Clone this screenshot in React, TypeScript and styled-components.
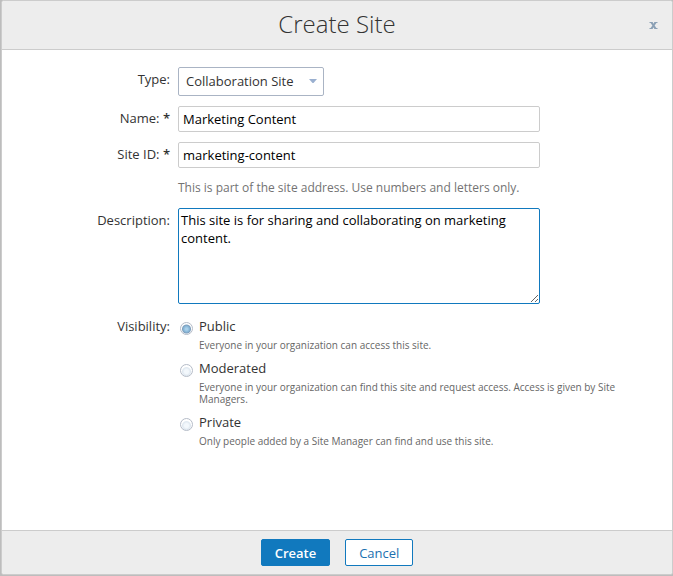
import React from "react";
import styled, { createGlobalStyle } from "styled-components";

const GlobalStyle = createGlobalStyle`
  *, *::before, *::after { box-sizing: border-box; }
  body {
    margin: 0;
    background: #bdbdbd;
    color: #333;
    font: 13px/18px "Open Sans", "Noto Sans", sans-serif;
  }
  button, input, select, textarea { font: inherit; margin: 0; }
`;

const Page = styled.div`
  display: flex;
  min-height: 100vh;
  padding: 0 0 1px 1px;
`;

const Dialog = styled.form`
  flex: 1;
  min-width: 0;
  display: flex;
  flex-direction: column;
  background: #fff;
  border: 1px solid #ccc;
  border-radius: 3px;
  overflow: hidden;
`;

const Header = styled.header`
  display: grid;
  grid-template-columns: 38px 1fr 38px;
  align-items: center;
  height: 49px;
  background: #ededed;
  border-bottom: 1px solid #ccc;
`;

const Title = styled.h1`
  grid-column: 2;
  margin: 0;
  padding-bottom: 2px;
  font-size: 24px;
  line-height: 32px;
  font-weight: 300;
  text-align: center;
`;

const CloseButton = styled.button`
  display: flex;
  justify-content: center;
  align-items: center;
  height: 24px;
  padding: 0;
  border: 0;
  background: none;
  cursor: pointer;
`;

const Body = styled.div`
  flex: 1;
  padding: 17px 48px 24px 0;
`;

const Row = styled.div<{ $gap?: number }>`
  display: grid;
  grid-template-columns: 168px 1fr;
  column-gap: 8px;
  align-items: start;
  margin-bottom: ${(p) => p.$gap ?? 10}px;
`;

const Label = styled.label<{ $top?: number }>`
  padding-top: ${(p) => p.$top ?? 3}px;
  text-align: right;
`;

const Required = styled.span`
  font-weight: 600;
`;

const SelectBox = styled.div`
  position: relative;
  width: 146px;
`;

const Select = styled.select`
  appearance: none;
  display: block;
  width: 100%;
  height: 29px;
  padding: 0 24px 2px 7px;
  border: 1px solid #aab4c4;
  border-radius: 2px;
  background: #fff;
  color: #333;
`;

const Caret = styled.svg`
  position: absolute;
  right: 7px;
  top: 12px;
  pointer-events: none;
`;

const TextInput = styled.input`
  display: block;
  width: 100%;
  max-width: 362px;
  height: 26px;
  padding: 0 4px;
  border: 1px solid #ccc;
  border-radius: 2px;
  background: #fff;
  color: #000;
`;

const Hint = styled.p`
  margin: 11px 0 0;
  color: #737373;
  font-size: 12px;
`;

const TextArea = styled.textarea`
  display: block;
  width: 100%;
  max-width: 362px;
  height: 96px;
  padding: 2px;
  border: 1px solid #1179be;
  border-radius: 2px;
  outline: 0;
  background: #fff;
  color: #000;
`;

const Options = styled.div`
  display: grid;
  row-gap: 8px;
`;

const Option = styled.div`
  display: grid;
  grid-template-columns: 13px 1fr;
  column-gap: 6px;
  padding-left: 2px;
`;

const Radio = styled.input`
  appearance: none;
  width: 13px;
  height: 13px;
  margin-top: 5px;
  border: 1px solid #b5bcc8;
  border-radius: 50%;
  background: radial-gradient(circle at 50% 60%, #f3f8fc 0 2px, #dfe8f0 4px, #fff 5px);
  &:checked {
    background: radial-gradient(circle at 50% 55%, #a9d0ea 0 1px, #86b5d6 3px, #7f9fbd 4px, #fff 5px);
  }
`;

const OptionNote = styled.p`
  grid-column: 2;
  margin: 4px 0 0;
  color: #666;
  font-size: 10px;
  line-height: 12px;
`;

const Footer = styled.footer`
  display: flex;
  justify-content: center;
  gap: 15px;
  padding: 8px 0;
  background: #ededed;
  border-top: 1px solid #ccc;
`;

const Button = styled.button<{ $primary?: boolean }>`
  height: 27px;
  padding: 0 13px;
  border: 1px solid #1179be;
  border-radius: 2px;
  background: ${(p) => (p.$primary ? "#1179be" : "#fff")};
  color: ${(p) => (p.$primary ? "#fff" : "#1b6fb0")};
  font-weight: ${(p) => (p.$primary ? 600 : 400)};
  cursor: pointer;
`;

const visibilities = [
  { id: "public", name: "Public", note: "Everyone in your organization can access this site." },
  {
    id: "moderated",
    name: "Moderated",
    note: "Everyone in your organization can find this site and request access. Access is given by Site Managers.",
  },
  { id: "private", name: "Private", note: "Only people added by a Site Manager can find and use this site." },
];

export default function App() {
  return (
    <>
      <GlobalStyle />
      <Page>
        <Dialog role="dialog" aria-labelledby="title" onSubmit={(e) => e.preventDefault()}>
          <Header>
            <Title id="title">Create Site</Title>
            <CloseButton type="button" aria-label="Close">
              <svg width="9" height="7" viewBox="0 0 9 7" fill="none" aria-hidden="true">
                <path d="M2.500 .5l4 6M6.500 .5l-4 6" stroke="#8ba0b5" strokeWidth="2" />
                <path d="M.5 .5h3M5.500 .5h3M.5 6.500h3M5.500 6.500h3" stroke="#8ba0b5" />
              </svg>
            </CloseButton>
          </Header>
          <Body>
            <Row>
              <Label htmlFor="type">Type:</Label>
              <SelectBox>
                <Select id="type" defaultValue="collaboration">
                  <option value="collaboration">Collaboration Site</option>
                </Select>
                <Caret width="8" height="4" viewBox="0 0 8 4" aria-hidden="true">
                  <path d="M0 0h8L4.500 4h-1z" fill="#9ab0d0" />
                </Caret>
              </SelectBox>
            </Row>
            <Row>
              <Label htmlFor="name">
                Name: <Required>*</Required>
              </Label>
              <TextInput id="name" required defaultValue="Marketing Content" />
            </Row>
            <Row $gap={11}>
              <Label htmlFor="site-id">
                Site ID: <Required>*</Required>
              </Label>
              <div>
                <TextInput id="site-id" required defaultValue="marketing-content" aria-describedby="site-id-hint" />
                <Hint id="site-id-hint">This is part of the site address. Use numbers and letters only.</Hint>
              </div>
            </Row>
            <Row $gap={13}>
              <Label htmlFor="description">Description:</Label>
              <TextArea
                id="description"
                defaultValue="This site is for sharing and collaborating on marketing content."
              />
            </Row>
            <Row role="radiogroup" aria-labelledby="visibility">
              <Label as="span" id="visibility" $top={0}>
                Visibility:
              </Label>
              <Options>
                {visibilities.map((v) => (
                  <Option key={v.id}>
                    <Radio
                      type="radio"
                      id={v.id}
                      name="visibility"
                      value={v.id}
                      defaultChecked={v.id === "public"}
                      aria-describedby={`${v.id}-note`}
                    />
                    <label htmlFor={v.id}>{v.name}</label>
                    <OptionNote id={`${v.id}-note`}>{v.note}</OptionNote>
                  </Option>
                ))}
              </Options>
            </Row>
          </Body>
          <Footer>
            <Button type="submit" $primary>
              Create
            </Button>
            <Button type="button">Cancel</Button>
          </Footer>
        </Dialog>
      </Page>
    </>
  );
}
